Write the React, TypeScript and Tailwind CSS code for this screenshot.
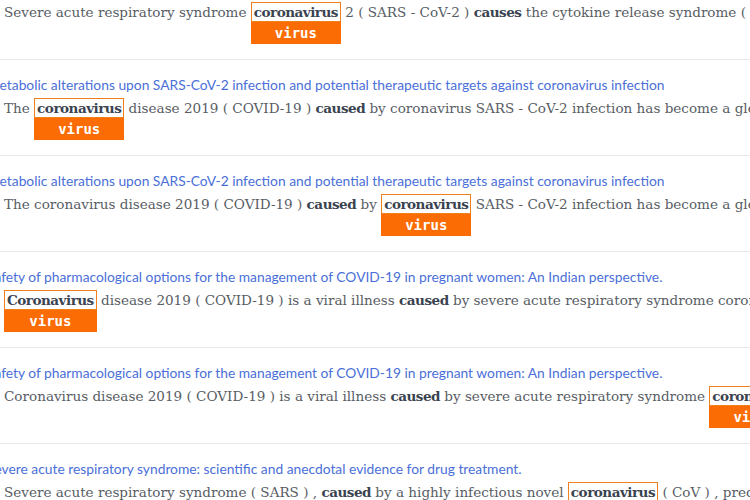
import React from "react";

type Piece = string | { b: string } | { hl: string };

type Row = {
  title: string;
  parts: Piece[];
};

const rows: Row[] = [
  {
    title: "Clinical features of patients infected with 2019 novel coronavirus in Wuhan, China",
    parts: [
      "Severe acute respiratory syndrome ",
      { hl: "coronavirus" },
      " 2 ( SARS - CoV-2 ) ",
      { b: "causes" },
      " the cytokine release syndrome ( CRS ) and leads to",
    ],
  },
  {
    title:
      "Metabolic alterations upon SARS-CoV-2 infection and potential therapeutic targets against coronavirus infection",
    parts: [
      "The ",
      { hl: "coronavirus" },
      " disease 2019 ( COVID-19 ) ",
      { b: "caused" },
      " by coronavirus SARS - CoV-2 infection has become a global pandemic",
    ],
  },
  {
    title:
      "Metabolic alterations upon SARS-CoV-2 infection and potential therapeutic targets against coronavirus infection",
    parts: [
      "The coronavirus disease 2019 ( COVID-19 ) ",
      { b: "caused" },
      " by ",
      { hl: "coronavirus" },
      " SARS - CoV-2 infection has become a global pandemic",
    ],
  },
  {
    title:
      "Safety of pharmacological options for the management of COVID-19 in pregnant women: An Indian perspective.",
    parts: [
      { hl: "Coronavirus" },
      " disease 2019 ( COVID-19 ) is a viral illness ",
      { b: "caused" },
      " by severe acute respiratory syndrome coronavirus 2",
    ],
  },
  {
    title:
      "Safety of pharmacological options for the management of COVID-19 in pregnant women: An Indian perspective.",
    parts: [
      "Coronavirus disease 2019 ( COVID-19 ) is a viral illness ",
      { b: "caused" },
      " by severe acute respiratory syndrome ",
      { hl: "coronavirus" },
      " 2",
    ],
  },
  {
    title:
      "Severe acute respiratory syndrome: scientific and anecdotal evidence for drug treatment.",
    parts: [
      "Severe acute respiratory syndrome ( SARS ) , ",
      { b: "caused" },
      " by a highly infectious novel ",
      { hl: "coronavirus" },
      " ( CoV ) , predominantly spreads",
    ],
  },
];

function Highlight({ word }: { word: string }) {
  return (
    <span className="inline-block align-top">
      <span className="block border border-[#f0801e] px-[2px] leading-[18px] font-bold tracking-[-0.5px] text-[#3a4350]">
        {word}
      </span>
      <span className="block bg-[#fb6c04] text-center text-white font-bold text-[14px] leading-[22px] [font-family:'DejaVu_Sans_Mono',monospace]">
        virus
      </span>
    </span>
  );
}

export default function App() {
  return (
    <div className="w-[750px] h-[500px] overflow-hidden bg-white">
      <div className="-mt-[36px] -ml-[13px]">
        {rows.map((row, i) => (
          <div key={i} className="border-b border-[#e8e8e8] pt-[15px] pb-[15px]">
            <div className="whitespace-nowrap text-[13.8px] leading-[20px] text-[#4a6fd8] [font-family:Lato,sans-serif]">
              {row.title}
            </div>
            <div className="mt-[3px] pl-[17px] whitespace-nowrap text-[13.55px] leading-[20px] text-[#585d64] [font-family:'DejaVu_Serif',serif]">
              {row.parts.map((p, j) =>
                typeof p === "string" ? (
                  <span key={j} className="whitespace-pre">{p}</span>
                ) : "b" in p ? (
                  <b key={j} className="font-bold tracking-[-0.5px] text-[#3a4350]">{p.b}</b>
                ) : (
                  <Highlight key={j} word={p.hl} />
                )
              )}
            </div>
          </div>
        ))}
      </div>
    </div>
  );
}
